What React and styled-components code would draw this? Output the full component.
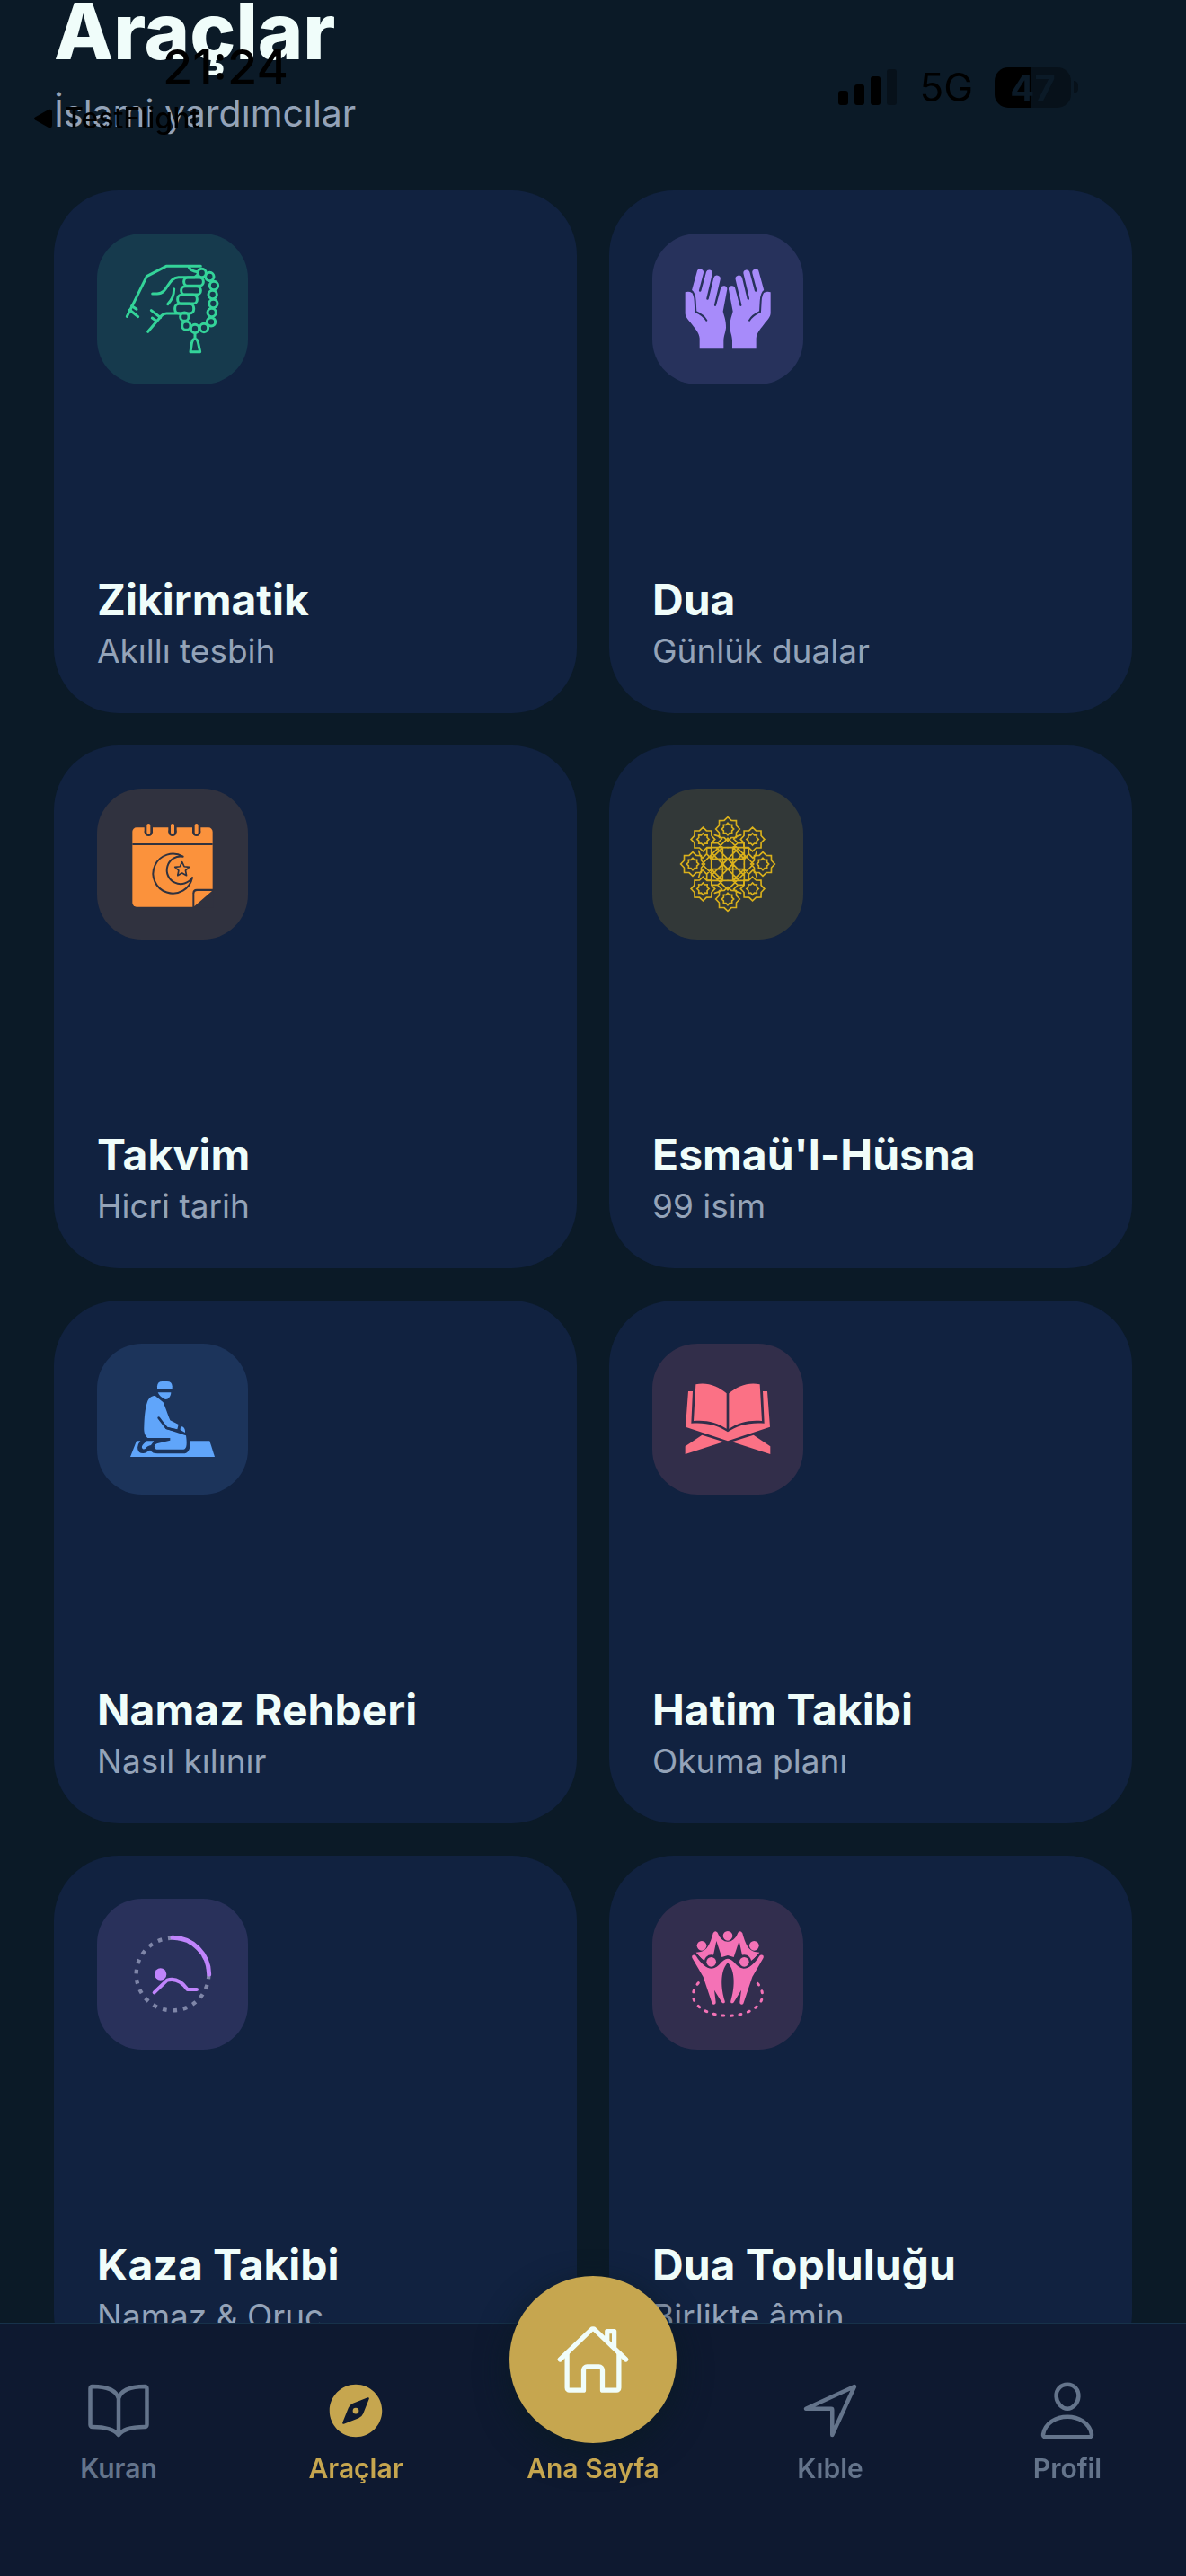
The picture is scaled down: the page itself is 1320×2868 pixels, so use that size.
import React from "react";
import styled, { createGlobalStyle } from "styled-components";
import {
  IoBookOutline,
  IoCompass,
  IoHomeOutline,
  IoNavigateOutline,
  IoPersonOutline,
} from "react-icons/io5";

const GlobalStyle = createGlobalStyle`
  * { box-sizing: border-box; }
  body {
    margin: 0;
    background: #0b1a27;
    font-family: Inter, "Liberation Sans", sans-serif;
  }
`;

const Screen = styled.div`
  height: 100vh;
  overflow: hidden;
  background: #0b1a27;
`;

const Content = styled.main`
  padding: 0 60px;
`;

const Header = styled.header`
  display: flex;
  flex-direction: column;
  gap: 32px;
  padding-bottom: 62px;
`;

const Heading = styled.h1`
  margin: 0;
  font-size: 86px;
  line-height: 70px;
  font-weight: 800;
  color: #f0fdfa;
`;

const Lead = styled.p`
  margin: 0;
  font-size: 41px;
  line-height: 48px;
  color: #94a3b8;
`;

const Grid = styled.div`
  display: grid;
  grid-template-columns: 1fr 1fr;
  gap: 36px;
`;

const Card = styled.a`
  display: flex;
  flex-direction: column;
  justify-content: space-between;
  aspect-ratio: 1;
  padding: 48px;
  border-radius: 72px;
  background: #112240;
  text-decoration: none;
`;

const Tile = styled.span`
  display: block;
  width: 168px;
  height: 168px;
  border-radius: 50px;
  overflow: hidden;
  background: ${(p) => p.$bg};
  color: ${(p) => p.$fg};

  svg {
    display: block;
    width: 100%;
    height: 100%;
  }
`;

const CardText = styled.span`
  display: flex;
  flex-direction: column;
  gap: 8px;
`;

const CardTitle = styled.span`
  font-size: 48px;
  line-height: 56px;
  font-weight: 700;
  white-space: nowrap;
  color: #f0fdfa;
`;

const CardSub = styled.span`
  font-size: 37px;
  line-height: 42px;
  color: #94a3b8;
`;

const StatusBar = styled.div`
  position: fixed;
  inset: 0 0 auto 0;
  display: flex;
  justify-content: space-between;
  padding: 44px 120px 0 38px;
  color: #000;
  pointer-events: none;
`;

const StatusLeft = styled.div`
  display: flex;
  flex-direction: column;
  gap: 8px;
`;

const Clock = styled.span`
  padding-left: 143px;
  font-size: 54px;
  line-height: 62px;
  font-weight: 500;
`;

const BackApp = styled.span`
  display: flex;
  align-items: center;
  gap: 14px;
  font-size: 32px;
  line-height: 36px;
  font-weight: 500;
`;

const StatusRight = styled.div`
  display: flex;
  align-items: center;
  height: 106px;
  gap: 24px;
  font-size: 44px;
  font-weight: 400;
`;

const Battery = styled.span`
  display: flex;
  align-items: center;
  gap: 3px;
`;

const BatteryBody = styled.span`
  width: 85px;
  height: 45px;
  border-radius: 15px;
  background: linear-gradient(90deg, #000 47%, #07111a 47%);
  color: #0b1a27;
  font-size: 40px;
  line-height: 45px;
  font-weight: 700;
  text-align: center;
`;

const BatteryTip = styled.span`
  width: 5px;
  height: 14px;
  border-radius: 0 5px 5px 0;
  background: #07111a;
`;

const TabBar = styled.nav`
  position: fixed;
  inset: auto 0 0 0;
  display: flex;
  align-items: flex-end;
  height: 282px;
  padding-bottom: 102px;
  border-top: 1px solid #17324a;
  background: #0e1930;
`;

const Tab = styled.a`
  flex: 1;
  display: flex;
  flex-direction: column;
  align-items: center;
  gap: 10px;
  font-size: 30px;
  line-height: 36px;
  font-weight: 600;
  white-space: nowrap;
  text-decoration: none;
  color: ${(p) => (p.$active ? "#c6a64f" : "#64748b")};
`;

const HomeDisc = styled.span`
  display: flex;
  align-items: center;
  justify-content: center;
  width: 186px;
  height: 186px;
  border-radius: 50%;
  background: #c6a64f;
  color: #f0fdfa;
  box-shadow: 0 12px 36px #0a1a26;
`;

const line = {
  fill: "none",
  stroke: "currentColor",
  strokeLinecap: "round",
  strokeLinejoin: "round",
};

const BEADS = [
  [374, 162], [400, 174], [414, 204], [410, 234], [412, 264], [407, 294],
  [405, 325], [381, 345], [351, 348], [322, 338], [316, 308],
];

function BeadsIcon() {
  return (
    <svg viewBox="24 30 504 504" aria-hidden="true" {...line} strokeWidth="9">
      <path d="M124 307 L190 173 L255 139 H370" />
      <path d="M140 272 L156 283 M133 285 L161 308" />
      <path d="M209 231 H225 C262 231 258 178 296 176 H350 L362 166 M331 143 C336 154 346 157 360 158" />
      <path d="M281 215 C281 240 272 252 260 266" />
      <rect x="314" y="177" width="65" height="28" rx="13" />
      <rect x="305" y="206" width="65" height="28" rx="13" />
      <rect x="293" y="235" width="65" height="29" rx="13" />
      <rect x="284" y="265" width="63" height="32" rx="14" />
      <path d="M205 287 L236 311 M208 312 L222 322 M194 358 L240 304 Q246 297 256 297 H300" />
      {BEADS.map(([x, y]) => (
        <circle key={`${x}-${y}`} cx={x} cy={y} r="14" />
      ))}
      <path d="M351 364 V380 M336 425 L340 397 Q343 382 351 382 Q359 382 362 397 L368 425 Z" />
    </svg>
  );
}

function OpenHand({ cut }) {
  return (
    <>
      <path
        fill="currentColor"
        d="M150 220 L167 158 A11 11 0 0 1 189 162 L174 219 a3 3 0 0 0 7 3 L198 158 A11 11 0 0 1 219 162 L199 246 a3 3 0 0 0 7 3 L223 178 A11 11 0 0 1 245 184 L225 268 a3 3 0 0 0 6 3 L247 211 A11 11 0 0 1 268 216 L254 290 C256 302 265 318 264 345 C262 362 257 370 256 387 V415 H176 V380 C174 362 166 354 150 333 C138 317 128 310 128 295 V226 C136 223 144 224 150 228 Z"
      />
      <path
        d="M148 221 C158 228 160 240 161 256 L163 291 C178 298 190 305 199 320"
        fill="none"
        stroke={cut}
        strokeWidth="6"
        strokeLinecap="round"
      />
    </>
  );
}

function HandsIcon({ cut }) {
  return (
    <svg viewBox="18 30 504 504" aria-hidden="true">
      <OpenHand cut={cut} />
      <g transform="translate(541 0) scale(-1 1)">
        <OpenHand cut={cut} />
      </g>
    </svg>
  );
}

function starPoints(cx, cy, outer, inner, n, turn = -90) {
  return Array.from({ length: n * 2 }, (_, i) => {
    const r = i % 2 ? inner : outer;
    const a = ((turn + (i * 180) / n) * Math.PI) / 180;
    return `${(cx + r * Math.cos(a)).toFixed(1)},${(cy + r * Math.sin(a)).toFixed(1)}`;
  }).join(" ");
}

function CalendarIcon({ cut }) {
  return (
    <svg viewBox="24 24 504 504" aria-hidden="true">
      <rect x="142" y="154" width="268" height="265" rx="14" fill="currentColor" />
      <path d="M142 210 H410" stroke={cut} strokeWidth="6" />
      {[196, 276, 356].map((x) => (
        <g key={x}>
          <path d={`M${x} 150 V169`} stroke={cut} strokeWidth="28" />
          <circle cx={x} cy="169" r="14" fill={cut} />
          <path d={`M${x} 147 V170`} {...line} strokeWidth="12" />
        </g>
      ))}
      <path
        d="M311 251 A66 66 0 1 0 342 321 A46 46 0 1 1 311 251 Z"
        fill="none"
        stroke={cut}
        strokeWidth="6"
        strokeLinejoin="round"
      />
      <polygon points={starPoints(308, 294, 25, 12, 5)} fill="none" stroke={cut} strokeWidth="5" strokeLinejoin="round" />
      <path d="M343 421 V373 Q343 359 357 359 H412 V421 Z" fill={cut} />
      <path d="M349 417 V376 Q349 366 359 366 H408 Z" fill="currentColor" />
    </svg>
  );
}

const QUADRANTS = ["1 1", "-1 1", "1 -1", "-1 -1"];

function RosetteIcon() {
  const ring = Array.from({ length: 8 }, (_, i) => {
    const a = (i * Math.PI) / 4;
    return [117 * Math.cos(a), 117 * Math.sin(a)];
  });
  return (
    <svg viewBox="-252 -252 504 504" aria-hidden="true" {...line} strokeLinejoin="miter" strokeWidth="5">
      {ring.map(([x, y], i) => (
        <g key={i}>
          <polygon points={starPoints(x, y, 40, 31, 8)} />
          <polygon points={starPoints(x, y, 20, 15, 8)} />
        </g>
      ))}
      {QUADRANTS.map((flip) => (
        <path
          key={flip}
          transform={`scale(${flip})`}
          d="M0 -86 L-86 0 M0 -55 H-55 V0 M-17 0 V-56 L-34 -70 H-54 M0 -17 H-56 L-70 -34 V-54 M-54 -70 V-55 H-70 M-44 -97 L-28 -92 L-20 -84 L-34 -70 M-97 -44 L-92 -28 L-84 -20 L-70 -34 M-55 -38 L0 17 M-38 -55 L17 0 M-17 -56 L-55 -17"
        />
      ))}
    </svg>
  );
}

function PrayerIcon({ cut }) {
  return (
    <svg viewBox="24 18 504 504" aria-hidden="true">
      <path d="M156 343 H400 L417 396 H135 Z" fill="currentColor" />
      <path
        d="M186 333 C158 352 156 384 182 379 L202 368 C212 379 214 380 226 380 H316 C328 378 332 366 331 340 L325 322"
        fill={cut}
        stroke={cut}
        strokeWidth="9"
        strokeLinejoin="round"
      />
      <path d="M225 171 V160 Q226 144 242 144 H258 Q274 144 275 160 V171 Z" fill="currentColor" />
      <path d="M227 181 H271 C270 195 262 204 254 204 C244 203 232 192 227 181 Z" fill="currentColor" />
      <path
        d="M193 333 C182 325 180 310 181 295 C182 265 184 235 192 212 C196 200 206 192 218 192 L245 214 C254 235 260 255 268 274 L296 288 L292 304 L260 297 L230 266 L255 303 L321 325 C324 345 326 372 312 371 H222 C212 366 214 354 226 351 L268 341 V333 Z"
        fill="currentColor"
      />
      <path d="M230 266 L256 300 L294 309" fill="none" stroke={cut} strokeWidth="8" strokeLinecap="round" strokeLinejoin="round" />
      <path d="M302 306 L303 296 C312 292 319 302 318 315 Z" fill="currentColor" />
      <path d="M190 343 H214 L204 357 C196 358 190 362 186 368 C180 373 172 370 174 361 C176 354 184 350 190 343 Z" fill="currentColor" />
    </svg>
  );
}

function RahleIcon() {
  return (
    <svg viewBox="18 18 504 504" aria-hidden="true" fill="currentColor">
      <path d="M163 154 C200 145 238 160 266 184 V302 C234 281 198 272 156 276 Z" />
      <path d="M377 154 C340 145 302 160 274 184 V302 C306 281 342 272 384 276 Z" />
      <path d="M138 177 H153 L148 284 C196 280 240 290 270 313 C300 290 344 280 392 284 L387 177 H402 L411 296 L270 343 L129 296 Z" />
      <path d="M184 323 L256 346 L128 387 V361 Z" />
      <path d="M356 323 L284 346 L412 387 V361 Z" />
    </svg>
  );
}

function MakeupPrayerIcon() {
  return (
    <svg viewBox="24 27 504 504" aria-hidden="true" {...line}>
      <circle
        cx="276"
        cy="279"
        r="121"
        stroke="#7f86a8"
        strokeWidth="13"
        strokeLinecap="butt"
        strokeDasharray="14 20.5"
        strokeDashoffset="-2"
      />
      <path d="M276 157 A122 122 0 0 1 398 279" strokeWidth="15" />
      <circle cx="236" cy="279" r="20" fill="currentColor" stroke="none" />
      <path d="M215 340 L258 299 C285 291 308 305 326 330 H357" strokeWidth="12" />
    </svg>
  );
}

function CommunityIcon({ cut }) {
  return (
    <svg viewBox="18 27 504 504" aria-hidden="true">
      <path
        d="M172 308 C140 345 150 385 210 408 C250 421 290 421 330 408 C390 385 400 345 368 308"
        {...line}
        strokeWidth="9"
        strokeDasharray="6 23"
      />
      <g fill="currentColor">
        <circle cx="270" cy="151" r="16" />
        <circle cx="183" cy="184" r="16" />
        <circle cx="358" cy="184" r="16" />
        <path d="M164 206 C196 206 208 190 221 142 Q228 130 236 140 C250 180 290 180 304 140 Q312 130 319 142 C332 190 344 206 376 206 L350 236 L318 215 L308 168 L290 222 L270 216 L250 222 L232 168 L222 215 L190 236 Z" />
      </g>
      <path
        d="M157 221 C180 246 196 258 215 258 C240 256 250 234 270 234 C290 234 300 256 325 258 C344 258 360 246 383 221"
        fill="none"
        stroke={cut}
        strokeWidth="28"
        strokeLinecap="round"
      />
      <circle cx="215" cy="238" r="24" fill={cut} />
      <circle cx="325" cy="238" r="24" fill={cut} />
      <g fill="currentColor">
        <circle cx="215" cy="238" r="16" />
        <circle cx="325" cy="238" r="16" />
        <path d="M151 224 C148 214 159 211 165 219 C180 243 198 260 217 260 C242 258 250 227 270 227 C290 227 298 258 323 260 C342 260 360 243 375 219 C381 211 392 214 389 224 L352 288 L323 374 C321 383 309 382 310 372 L315 332 L291 371 C287 379 277 376 280 368 C292 330 298 270 270 240 C242 270 248 330 260 368 C263 376 253 379 249 371 L225 332 L230 372 C231 382 219 383 217 374 L188 288 Z" />
      </g>
    </svg>
  );
}

const TOOLS = [
  { title: "Zikirmatik", sub: "Akıllı tesbih", Icon: BeadsIcon, fg: "#34d399", bg: "#163a4d" },
  { title: "Dua", sub: "Günlük dualar", Icon: HandsIcon, fg: "#a78bfa", bg: "#27325c" },
  { title: "Takvim", sub: "Hicri tarih", Icon: CalendarIcon, fg: "#fb923c", bg: "#30323f" },
  { title: "Esmaü'l-Hüsna", sub: "99 isim", Icon: RosetteIcon, fg: "#d9b01c", bg: "#323838" },
  { title: "Namaz Rehberi", sub: "Nasıl kılınır", Icon: PrayerIcon, fg: "#60a5fa", bg: "#1c345b" },
  { title: "Hatim Takibi", sub: "Okuma planı", Icon: RahleIcon, fg: "#fb7185", bg: "#322e4a" },
  { title: "Kaza Takibi", sub: "Namaz & Oruç", Icon: MakeupPrayerIcon, fg: "#c084fc", bg: "#29315b" },
  { title: "Dua Topluluğu", sub: "Birlikte âmin", Icon: CommunityIcon, fg: "#f472b6", bg: "#322e4e" },
];

const TABS = [
  { label: "Kuran", Icon: IoBookOutline },
  { label: "Araçlar", Icon: IoCompass, active: true },
  { label: "Ana Sayfa", Icon: IoHomeOutline, active: true, home: true },
  { label: "Kıble", Icon: IoNavigateOutline },
  { label: "Profil", Icon: IoPersonOutline },
];

export default function App() {
  return (
    <Screen>
      <GlobalStyle />
      <Content>
        <Header>
          <Heading>Araçlar</Heading>
          <Lead>İslami yardımcılar</Lead>
        </Header>
        <Grid>
          {TOOLS.map(({ title, sub, Icon, fg, bg }) => (
            <Card key={title} href="#">
              <Tile $bg={bg} $fg={fg}>
                <Icon cut={bg} />
              </Tile>
              <CardText>
                <CardTitle>{title}</CardTitle>
                <CardSub>{sub}</CardSub>
              </CardText>
            </Card>
          ))}
        </Grid>
      </Content>

      <StatusBar>
        <StatusLeft>
          <Clock>21:24</Clock>
          <BackApp>
            <svg width="20" height="22" viewBox="0 0 20 22" aria-hidden="true">
              <path d="M1 9.500 L16 1 Q20 0 20 4 V18 Q20 22 16 21 L1 12.500 Q-1 11 1 9.500 Z" />
            </svg>
            TestFlight
          </BackApp>
        </StatusLeft>
        <StatusRight>
          <svg width="66" height="40" viewBox="0 0 66 40" aria-hidden="true">
            <rect x="0" y="24" width="11" height="16" rx="3" />
            <rect x="18" y="17" width="11" height="23" rx="3" />
            <rect x="36" y="8" width="11" height="32" rx="3" />
            <rect x="54" y="0" width="11" height="40" rx="3" fill="#07111a" />
          </svg>
          <span>5G</span>
          <Battery>
            <BatteryBody>47</BatteryBody>
            <BatteryTip />
          </Battery>
        </StatusRight>
      </StatusBar>

      <TabBar>
        {TABS.map(({ label, Icon, active, home }) => (
          <Tab key={label} href="#" $active={active}>
            {home ? (
              <HomeDisc>
                <Icon size={84} />
              </HomeDisc>
            ) : (
              <Icon size={72} />
            )}
            {label}
          </Tab>
        ))}
      </TabBar>
    </Screen>
  );
}
